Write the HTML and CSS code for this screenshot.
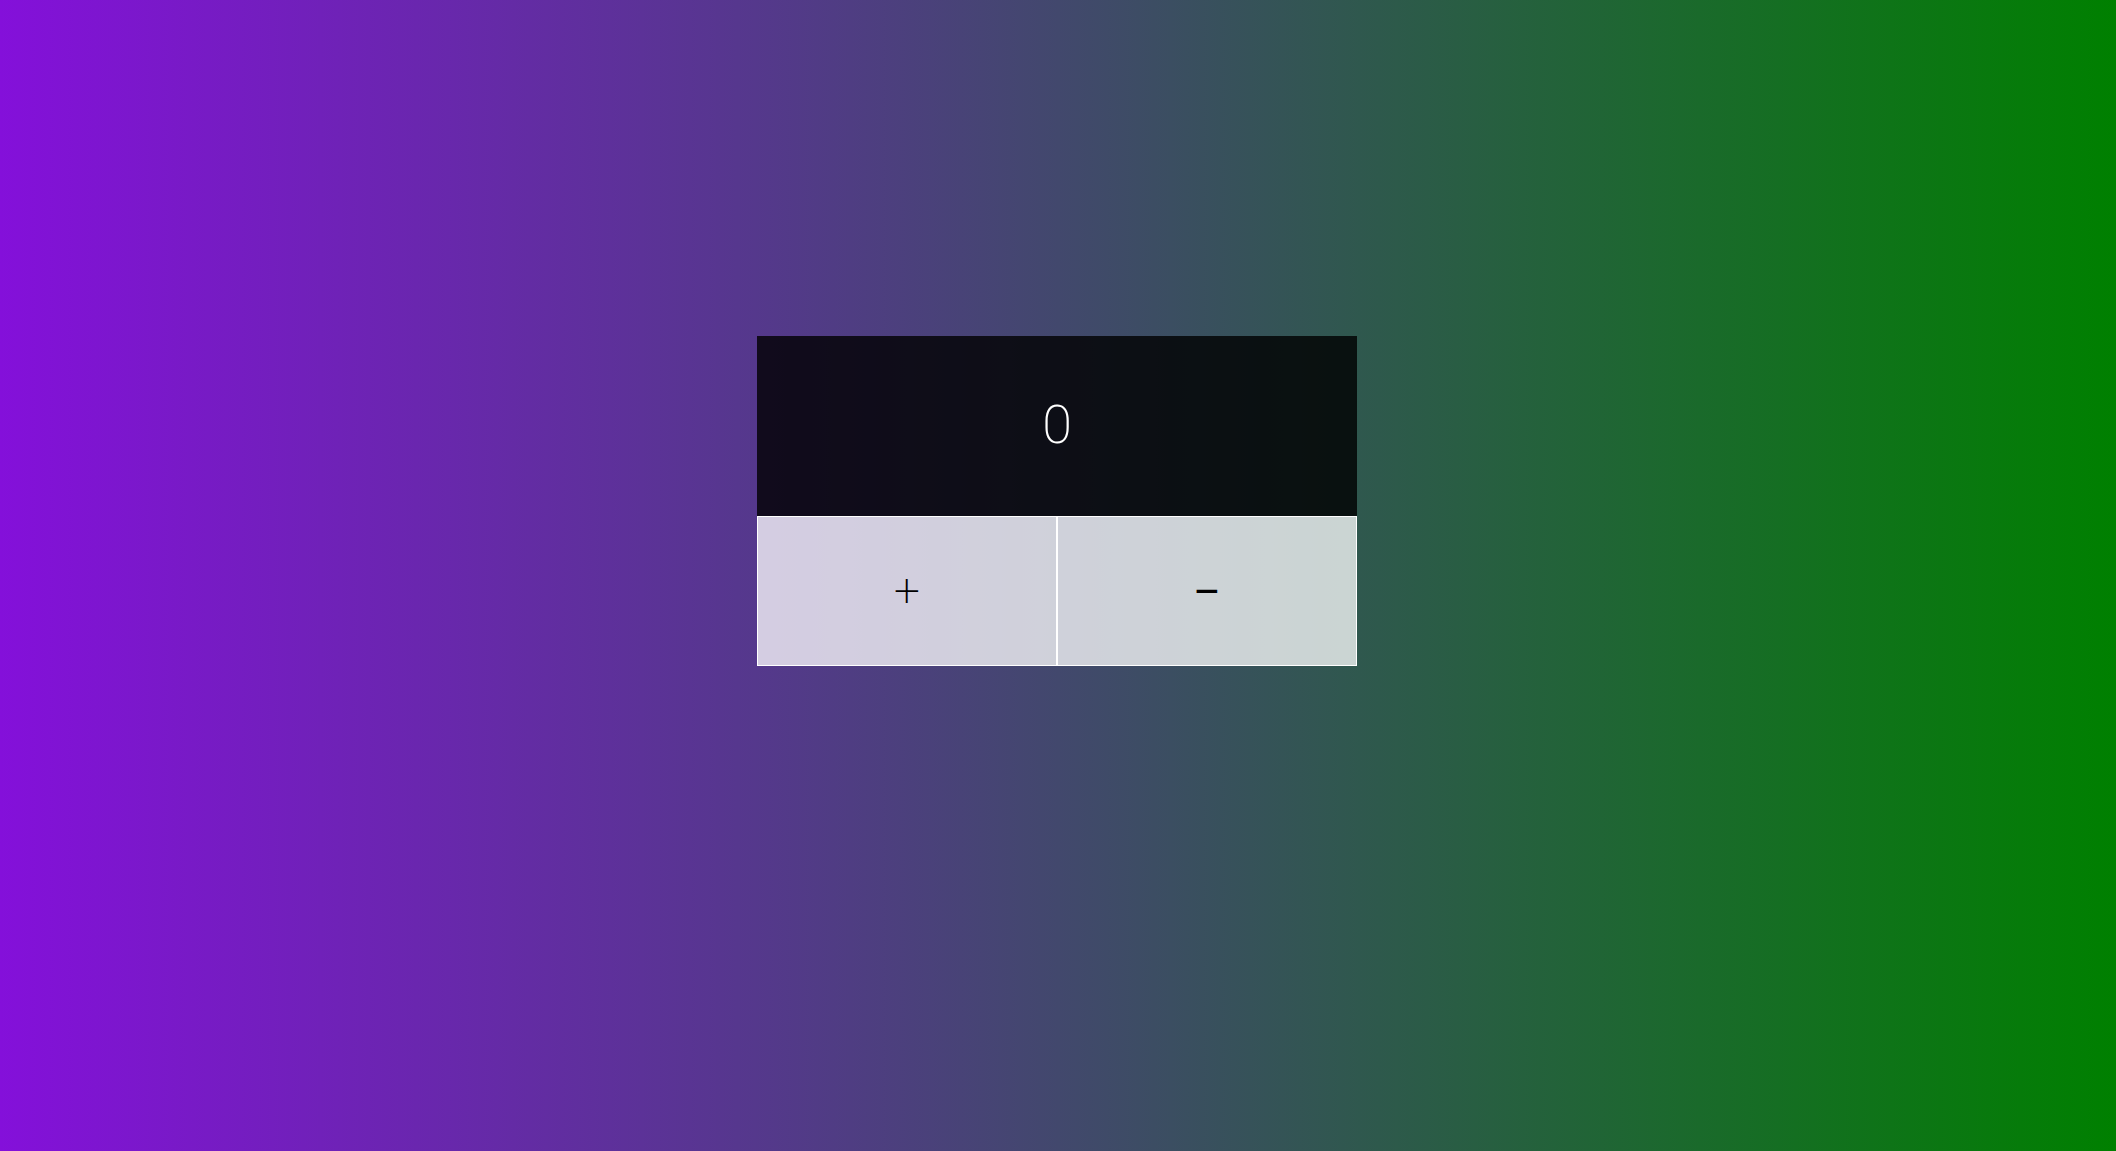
FILE: index.html
```html
<!DOCTYPE html>
<html lang="en">
<head>
<meta charset="utf-8">
<title>Counter</title>
<link rel="stylesheet" href="styles.css">
</head>
<body>
<main class="page">
  <section class="counter">
    <div class="display">0</div>
    <div class="controls">
      <button class="btn btn-plus" type="button">+</button>
      <button class="btn btn-minus" type="button">–</button>
    </div>
  </section>
</main>
</body>
</html>
```

FILE: styles.css
```css
html, body {
  margin: 0;
  padding: 0;
  height: 100%;
}
body {
  background: linear-gradient(to right, rgb(132, 16, 218), rgb(0, 128, 0));
  font-family: Roboto, "Noto Sans", sans-serif;
  overflow: hidden;
}
.page {
  display: flex;
  justify-content: center;
  align-items: flex-start;
  padding-top: 336px;
  padding-right: 2px;
  box-sizing: border-box;
  height: 100%;
}
.counter {
  width: 600px;
  display: flex;
  flex-direction: column;
}
.display {
  height: 180px;
  box-sizing: border-box;
  padding-bottom: 3px;
  background: rgba(0, 0, 0, 0.8);
  color: #fff;
  font-weight: 200;
  font-size: 54px;
  display: flex;
  align-items: center;
  justify-content: center;
}
.controls {
  display: flex;
}
.btn {
  flex: 1;
  height: 150px;
  margin: 0;
  border: 1px solid #fff;
  background: rgba(255, 255, 255, 0.75);
  color: #000;
  font-family: Roboto, "Noto Sans", sans-serif;
  padding: 0;
  cursor: pointer;
  display: flex;
  align-items: center;
  justify-content: center;
  line-height: 1;
}
.btn-plus {
  font-size: 46px;
  font-weight: 200;
}
.btn-minus {
  font-size: 42px;
  font-weight: 400;
  padding-top: 4px;
}
```
